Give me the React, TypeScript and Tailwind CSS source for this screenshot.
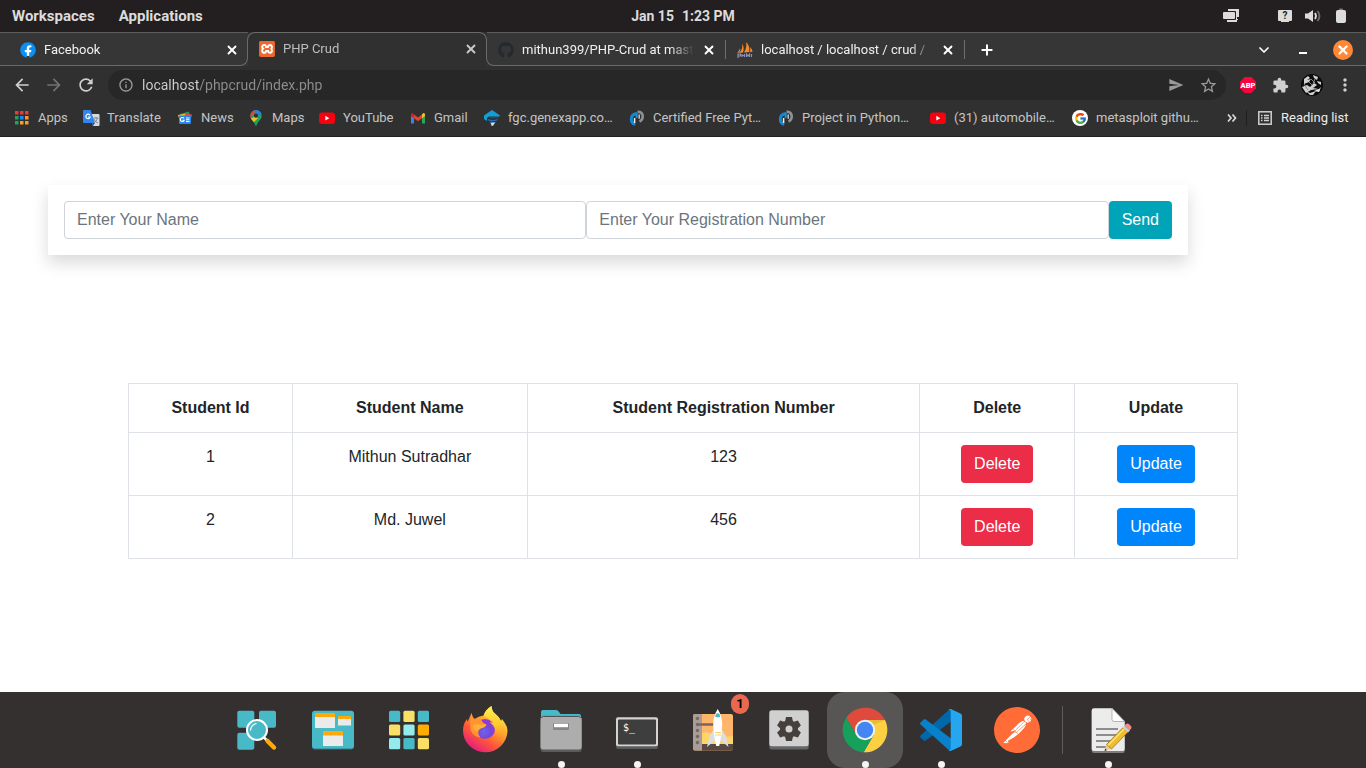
import type { ReactNode } from "react";
import { ChevronDown, Plus, X } from "lucide-react";
import { FaFacebook, FaGithub } from "react-icons/fa";
import { FcGoogle } from "react-icons/fc";
import {
  MdArrowBack,
  MdArrowForward,
  MdExtension,
  MdInfoOutline,
  MdMoreVert,
  MdRefresh,
  MdSend,
  MdStarBorder,
} from "react-icons/md";
import { SiPostman, SiXampp } from "react-icons/si";

/* ---------- Top bar ---------- */

function TopBar() {
  return (
    <header className="flex h-8 shrink-0 items-center bg-[#231f20] px-3 text-[15px] font-bold text-[#dcdcdc]">
      <div className="flex flex-1 gap-6">
        <button>Workspaces</button>
        <button>Applications</button>
      </div>
      <button className="flex gap-2 text-[14px]">
        <span>Jan 15</span>
        <span>1:23 PM</span>
      </button>
      <div className="flex flex-1 items-center justify-end">
        <svg width="16" height="14" viewBox="0 0 16 14" className="mr-[39px]" aria-label="Windows">
          <path d="M5 0h11v8h-2v2h1v1H8v-1h5V3H5z" fill="#dcdcdc" />
          <rect x="0" y="3" width="12" height="7" rx="1" fill="#dcdcdc" />
          <path d="M4 11h10v2H4z" fill="#dcdcdc" />
          <path d="M5 2.500h7.500V10.500H4" fill="none" stroke="#231f20" />
        </svg>
        <svg width="14" height="14" viewBox="0 0 14 14" className="mr-[13px]" aria-label="Network">
          <path d="M1 1h12a1 1 0 0 1 1 1v9a1 1 0 0 1-1 1h-2v1H3v-1H1a1 1 0 0 1-1-1V2a1 1 0 0 1 1-1z" fill="#dcdcdc" />
          <text x="7" y="10" textAnchor="middle" fontSize="10" fontWeight="700" fill="#231f20">?</text>
        </svg>
        <svg width="16" height="14" viewBox="0 0 16 14" className="mr-[15px]" aria-label="Volume">
          <path d="M0 4.500h3L8 1v12L3 9.500H0z" fill="#dcdcdc" />
          <path d="M10 4q2 3 0 6" fill="none" stroke="#dcdcdc" strokeWidth="1.800" />
          <path d="M12.500 2q4 5 0 10" fill="none" stroke="#6f6c6c" strokeWidth="1.800" />
        </svg>
        <svg width="10" height="16" viewBox="0 0 10 16" className="mr-2" aria-label="Battery">
          <rect x="3" y="0.500" width="4" height="3" rx="1" fill="#777" />
          <rect x="0" y="2" width="10" height="13" rx="2" fill="#dcdcdc" />
        </svg>
      </div>
    </header>
  );
}

/* ---------- Tabs ---------- */

function TabBody({ icon, title, dim }: { icon: ReactNode; title: string; dim?: boolean }) {
  return (
    <>
      <span className="flex size-4 shrink-0 items-center justify-center">{icon}</span>
      <span
        className={
          "ml-2 min-w-0 flex-1 overflow-hidden whitespace-nowrap text-left [mask-image:linear-gradient(90deg,#000_calc(100%-24px),transparent)] " +
          (dim ? "text-[#bdbdbd]" : "text-[#f0f0f0]")
        }
      >
        {title}
      </span>
      <button aria-label={"Close " + title} className={"ml-2 shrink-0 " + (dim ? "text-[#c8c8c8]" : "text-white")}>
        <X size={14} strokeWidth={3.2} />
      </button>
    </>
  );
}

function TabStrip() {
  return (
    <div className="flex h-[34px] bg-[#363636] text-[13px]">
      <div className="relative flex w-[248px] items-center border-t border-[#5c5c5c] bg-[#363636] pr-[9px] pl-5 after:pointer-events-none after:absolute after:inset-x-0 after:bottom-0 after:h-[10px] after:rounded-br-lg after:border-r after:border-b after:border-[#6a6a6a]">
        <TabBody
          icon={
            <span className="flex size-3 items-center justify-center rounded-full bg-white">
              <FaFacebook size={16} color="#0a8ff5" className="shrink-0" />
            </span>
          }
          title="Facebook"
        />
      </div>
      <div className="relative flex w-[239px] items-center bg-[#303030] pr-[9px] pl-[11px] before:pointer-events-none before:absolute before:top-0 before:-left-px before:right-0 before:h-6 before:rounded-t-lg before:border-x before:border-t before:border-[#6a6a6a]">
        <TabBody
          dim
          icon={
            <span className="flex size-[14px] items-center justify-center bg-white">
              <SiXampp size={16} color="#f0692c" className="shrink-0" />
            </span>
          }
          title="PHP Crud"
        />
      </div>
      <div className="relative flex flex-1 items-center border-t border-[#5c5c5c] before:pointer-events-none before:absolute before:right-0 before:bottom-0 before:-left-px before:h-[10px] before:rounded-bl-lg before:border-b before:border-l before:border-[#6a6a6a]">
        <div className="flex w-[238px] items-center pr-[9px] pl-[11px]">
          <TabBody icon={<FaGithub size={16} color="#24292f" />} title="mithun399/PHP-Crud at mast" />
        </div>
        <div className="flex w-[240px] items-center border-x border-[#6f6f6f] pr-[9px] pl-[11px]">
          <TabBody
            icon={
              <svg width="16" height="16" viewBox="0 0 16 16">
                <path d="M5 1.500C6 5 5 8 2 11l4-.5C7 7 7 4 5 1.500zM9 0c1 4 0 7-2 10.500l5-.5C13 6 12 3 9 0zM13 5c.6 2 .3 4-.5 5l3-.2C15.400 8 14.500 6.400 13 5zM3 6C2.500 8 1.500 9.500 0 11l2-.5C3 9 3.500 8 3 6z" fill="#f58b2c" />
                <path d="M1 16v-4h2.500v2H1m4-2v3m0-1.500h2.500M7.500 12v3m2 0v-3l1.500 2 1.500-2v3m2-3v3" fill="none" stroke="#8c8fb8" strokeWidth="1.200" />
              </svg>
            }
            title="localhost / localhost / crud /"
          />
        </div>
        <button aria-label="New tab" className="ml-[14px] text-white">
          <Plus size={16} strokeWidth={3} />
        </button>
        <div className="flex flex-1 items-center justify-end gap-[23px] pr-[13px] text-white">
          <button aria-label="Search tabs">
            <ChevronDown size={16} strokeWidth={2.6} />
          </button>
          <button aria-label="Minimize" className="flex h-5 w-4 items-end justify-center pb-[6px]">
            <span className="h-[2px] w-2 bg-white" />
          </button>
          <button aria-label="Close window" className="-ml-px flex size-5 items-center justify-center rounded-full bg-[#ff8838]">
            <X size={14} strokeWidth={4} />
          </button>
        </div>
      </div>
    </div>
  );
}

/* ---------- Address bar ---------- */

function AddressBar() {
  return (
    <div className="flex h-[38px] items-center bg-[#303030] pr-[11px] pl-3 text-[#cfcfcf]">
      <button aria-label="Back" className="mr-3">
        <MdArrowBack size={20} />
      </button>
      <button aria-label="Forward" className="mr-3 text-[#727272]">
        <MdArrowForward size={20} />
      </button>
      <button aria-label="Reload" className="mr-3">
        <MdRefresh size={20} />
      </button>
      <div className="flex h-[30px] flex-1 items-center rounded-full bg-[#272727] pr-2 pl-[10px] text-[#9a9a9a]">
        <MdInfoOutline size={16} />
        <input
          aria-label="Address"
          defaultValue="localhost/phpcrud/index.php"
          className="ml-2 min-w-0 flex-1 bg-[linear-gradient(90deg,#d0d0d0_57px,#8e8e8e_57px)] bg-clip-text text-[14px] text-transparent outline-none"
        />
        <button aria-label="Share" className="mr-[15px]">
          <MdSend size={16} />
        </button>
        <button aria-label="Bookmark this page">
          <MdStarBorder size={19} />
        </button>
      </div>
      <button aria-label="Adblock Plus" className="ml-[14px]">
        <svg width="16" height="16" viewBox="0 0 16 16">
          <path d="M4.700 0h6.600L16 4.700v6.600L11.300 16H4.700L0 11.300V4.700z" fill="#f5063f" />
          <text x="8" y="10.800" textAnchor="middle" fontSize="7.500" fontWeight="900" fill="#fff">ABP</text>
        </svg>
      </button>
      <button aria-label="Extensions" className="ml-4">
        <MdExtension size={17} />
      </button>
      <button aria-label="Profile" className="ml-3">
        <svg width="22" height="22" viewBox="0 0 22 22">
          <circle cx="11" cy="11" r="11" fill="#0c0c0c" />
          <path d="M3 5l4-3 2 2-3 2 4-1-2 3-5 2zM12 1l5 2-1 3-3-2zM1 13l5-2 3 2 4-4 3 2-4 3 5 1-7 1-5 3zM16 7l4 1v3l-3-2zM5 17l4 2 6-2-3 4H9z" fill="#cfcfcf" />
          <path d="M8 8l3 3M10 5l4 4M3 10l4 6M13 14l6 3M14 5l-2 5" stroke="#888" />
          <path d="M13 17l5-2 2-2-2 5z" fill="#eee" />
        </svg>
      </button>
      <button aria-label="Menu" className="ml-3">
        <MdMoreVert size={20} />
      </button>
    </div>
  );
}

/* ---------- Bookmarks ---------- */

const appsGrid = [
  ["#ea3b3b", "#ea3b3b", "#ea3b3b"],
  ["#1ba660", "#1a8cf0", "#fb9a2c"],
  ["#1ba660", "#fb9a2c", "#fb9a2c"],
];

const AppsIcon = () => (
  <svg width="16" height="16" viewBox="0 0 16 16">
    {appsGrid.map((row, y) =>
      row.map((c, x) => <rect key={x + "-" + y} x={1 + x * 5} y={1 + y * 5} width="3.500" height="3.500" fill={c} />),
    )}
  </svg>
);

const TranslateIcon = () => (
  <svg width="17" height="17" viewBox="0 0 17 17" className="shrink-0">
    <path d="M7 4h8.500q1 0 1 1v10q0 1-1 1H10z" fill="#d8dade" />
    <path d="M1 0h6.500L12 13H1q-1 0-1-1V1q0-1 1-1z" fill="#2f86ee" />
    <path d="M9 13h3l-2 3z" fill="#1d57b8" />
    <path d="M7 5.300A2.200 2.200 0 1 0 7.200 7H5" fill="none" stroke="#fff" strokeWidth="1.200" />
    <path d="M10.500 8h5M13 7v1m1.500 0q-.5 3-3.500 5m0-4q1 3 4 4" fill="none" stroke="#75869c" />
  </svg>
);

const NewsIcon = () => (
  <svg width="16" height="16" viewBox="0 0 16 16">
    <path d="M3 4l9-2.500 1 5H3z" fill="#15a05a" />
    <path d="M1 5l8-1.500v5H2z" fill="#f9b42d" />
    <path d="M8 3.500l7 1-1 4H8z" fill="#e8473c" />
    <rect x="2" y="5.500" width="12" height="8.500" rx="1" fill="#2688ee" />
    <path d="M7 8.400A2 2 0 1 0 7.200 10.200H5.500M9 8h3.500M9 9.800h3.500M9 11.500h3.500" fill="none" stroke="#fff" strokeWidth="1.100" />
  </svg>
);

const MapsIcon = () => (
  <svg width="16" height="16" viewBox="0 0 16 16">
    <defs>
      <clipPath id="pin">
        <path d="M8 0a5.700 5.700 0 0 1 5.700 5.700C13.700 10 9.500 11 8.700 15.300q-.7 1.400-1.400 0C6.500 11 2.300 10 2.300 5.700A5.700 5.700 0 0 1 8 0z" />
      </clipPath>
    </defs>
    <g clipPath="url(#pin)">
      <rect width="16" height="16" fill="#1fa45a" />
      <path d="M0 0h9L0 10z" fill="#e5433a" />
      <path d="M6 0h10v3L8 6z" fill="#2f7de9" />
      <path d="M8 6L2 9l3 4 5-5z" fill="#f8bb2c" />
    </g>
    <circle cx="8" cy="5.700" r="2.100" fill="#303030" />
  </svg>
);

const YouTubeIcon = () => (
  <svg width="16" height="16" viewBox="0 0 16 16">
    <rect x="0" y="2.500" width="16" height="11.500" rx="3" fill="#f80010" />
    <path d="M6.300 5.800v4.800l4-2.400z" fill="#fff" />
  </svg>
);

const GmailIcon = () => (
  <svg width="16" height="16" viewBox="0 0 16 16">
    <path d="M1 4v9.500h3V7z" fill="#3b82ee" />
    <path d="M15 4v9.500h-3V7z" fill="#2ba757" />
    <path d="M4 4.500l4 3 4-3v3.800l-4 3-4-3z" fill="#e8432f" />
    <path d="M1 4.500Q1 2.700 2.500 2.900L4 4.200v4.100L1 6z" fill="#c5271c" />
    <path d="M15 4.500q0-1.800-1.500-1.600L12 4.200v4.100L15 6z" fill="#f9bb2d" />
  </svg>
);

const GenexIcon = () => (
  <svg width="16" height="16" viewBox="0 0 16 16">
    <path d="M8 0l8 5.500-1 1.300H4.500L3 8v3L0 9V5.500z" fill="#149fd4" />
    <path d="M5 6.500h9v1.700H6z" fill="#1f4d77" />
    <path d="M3.500 9q5 2 10.500 0-1 2.200-4 2.200H7q-3 0-3.500-2.200z" fill="#2e6dac" />
    <path d="M5.500 11.700q4 1 7 .3l-2 1.600-1.500 2.200H7.500z" fill="#3c6fae" />
    <path d="M7 12.800l4-.3-2 3.300H7.600z" fill="#d5e1ed" />
  </svg>
);

const PythonCourseIcon = () => (
  <svg width="16" height="16" viewBox="0 0 16 16">
    <path d="M8.500 1.700q4.500-.2 5.200 4 .3 4.300-3.200 5.800" fill="none" stroke="#8d9297" strokeWidth="2.600" />
    <path d="M10.200 4.500v4.300" stroke="#d9dcdf" strokeWidth="1.300" />
    <path d="M8 3.600Q2.300 4.500 2.300 9q0 4.500 4 5.200" fill="none" stroke="#1489cf" strokeWidth="3" />
    <path d="M7.700 3v5" stroke="#1496dd" strokeWidth="2" />
    <path d="M5.600 8v5" stroke="#e8eef2" strokeWidth="1.500" />
  </svg>
);

const GoogleIcon = () => (
  <span className="flex size-4 items-center justify-center rounded-full bg-white">
    <FcGoogle size={13} />
  </span>
);

const bookmarks: { label: string; width: string; icon: ReactNode }[] = [
  { label: "Apps", width: "w-[29px]", icon: <AppsIcon /> },
  { label: "Translate", width: "w-[54px]", icon: <TranslateIcon /> },
  { label: "News", width: "w-[31px]", icon: <NewsIcon /> },
  { label: "Maps", width: "w-[31px]", icon: <MapsIcon /> },
  { label: "YouTube", width: "w-[51px]", icon: <YouTubeIcon /> },
  { label: "Gmail", width: "w-[34px]", icon: <GmailIcon /> },
  { label: "fgc.genexapp.co…", width: "w-[105px]", icon: <GenexIcon /> },
  { label: "Certified Free Pyt…", width: "w-[109px]", icon: <PythonCourseIcon /> },
  { label: "Project in Python…", width: "w-[112px]", icon: <PythonCourseIcon /> },
  { label: "(31) automobile…", width: "w-[102px]", icon: <YouTubeIcon /> },
  { label: "metasploit githu…", width: "w-[111px]", icon: <GoogleIcon /> },
];

function BookmarksBar() {
  return (
    <nav className="flex h-[33px] items-center border-b border-[#231f20] bg-[#303030] px-[14px] pb-1 text-[13px] text-[#c4c4c4]">
      <div className="flex flex-1 gap-4">
        {bookmarks.map((b) => (
          <a key={b.label} href="#" className="flex items-center gap-2">
            <span className="flex size-4 items-center justify-center">{b.icon}</span>
            <span className={"whitespace-nowrap " + b.width}>{b.label}</span>
          </a>
        ))}
      </div>
      <button aria-label="More bookmarks" className="mr-[9px]">
        <svg width="10" height="8" viewBox="0 0 10 8">
          <path d="M1 .5L4 4 1 7.500M5.500.5l3 3.500-3 3.500" fill="none" stroke="#d8d8d8" strokeWidth="1.700" />
        </svg>
      </button>
      <span className="h-4 w-px bg-[#1f1f1f]" />
      <button className="ml-[11px] flex items-center gap-[9px] text-[#ececec]">
        <svg width="14" height="14" viewBox="0 0 14 14">
          <rect x=".8" y=".8" width="12.400" height="12.400" fill="none" stroke="#d0d0d0" strokeWidth="1.500" />
          <path d="M3 4.500h1.500M3 7h1.500M3 9.500h1.500M6 4.500h5M6 7h5M6 9.500h5" stroke="#d0d0d0" strokeWidth="1.300" />
        </svg>
        <span className="w-[71px] whitespace-nowrap text-left">Reading list</span>
      </button>
    </nav>
  );
}

/* ---------- Page ---------- */

const students = [
  { id: 1, name: "Mithun Sutradhar", reg: "123" },
  { id: 2, name: "Md. Juwel", reg: "456" },
];

const inputClass =
  "h-[38px] min-w-0 flex-1 rounded border border-[#ced4da] bg-white px-3 text-base text-[#495057] placeholder:text-[#6c757d] outline-none focus:border-[#80bdff]";
const cell = "border border-[#dee2e6] p-3";
const action = "h-[38px] rounded px-[13px] text-white";

function CrudPage() {
  return (
    <main className="flex-1 bg-white p-12 font-['Liberation_Sans',Arial,sans-serif] text-base text-[#212529]">
      <form
        className="flex max-w-[1140px] bg-white p-4 shadow-[0_8px_16px_rgba(0,0,0,0.15)]"
        onSubmit={(e) => e.preventDefault()}
      >
        <input aria-label="Name" placeholder="Enter Your Name" className={inputClass} />
        <input aria-label="Registration number" placeholder="Enter Your Registration Number" className={inputClass} />
        <button className="h-[38px] rounded bg-[#00a4b8] px-[13px] text-white">Send</button>
      </form>

      <div className="mx-auto mt-32 max-w-[1110px]">
        <table className="w-full border-collapse text-center">
          <thead>
            <tr>
              {["Student Id", "Student Name", "Student Registration Number", "Delete", "Update"].map((h) => (
                <th key={h} className={cell}>
                  {h}
                </th>
              ))}
            </tr>
          </thead>
          <tbody>
            {students.map((s) => (
              <tr key={s.id} className="align-top">
                <td className={cell}>{s.id}</td>
                <td className={cell}>{s.name}</td>
                <td className={cell}>{s.reg}</td>
                <td className={cell}>
                  <button className={action + " bg-[#eb2d47]"}>Delete</button>
                </td>
                <td className={cell}>
                  <button className={action + " bg-[#0085fb]"}>Update</button>
                </td>
              </tr>
            ))}
          </tbody>
        </table>
      </div>
    </main>
  );
}

/* ---------- Dock ---------- */

const SearchApps = () => (
  <svg width="48" height="48" viewBox="0 0 48 48">
    <g fill="#48b9c7">
      <rect x="4.300" y="4.700" width="17" height="17" rx="2" />
      <rect x="26" y="4.700" width="17" height="17" rx="2" />
      <rect x="4.300" y="26.700" width="17" height="17" rx="2" />
    </g>
    <path d="M31 31.500l4 4" stroke="#fff" strokeWidth="2.500" />
    <path d="M34.500 35l6.500 6.500" stroke="#ffa90a" strokeWidth="4.500" strokeLinecap="round" />
    <circle cx="24" cy="24" r="10" fill="#48b9c7" stroke="#fff" strokeWidth="2" />
    <path d="M17.500 24.500q.5-6 6-7" fill="none" stroke="#fff" strokeWidth="1.200" />
  </svg>
);

const WorkspacesIcon = () => (
  <svg width="48" height="48" viewBox="0 0 48 48">
    <rect x="3" y="5.500" width="42" height="38" rx="3" fill="#2f7d88" />
    <rect x="3" y="4.700" width="42" height="37.800" rx="3" fill="#48b9c7" />
    <path d="M6 11h20v11H6zM29 12.500h13v7H29zM14 29h20v11H14z" fill="#ebebeb" />
    <path d="M6 8q0-1 1-1h18q1 0 1 1v3H6zM29 11q0-1 1-1h11q1 0 1 1v2H29zM14 26q0-1 1-1h18q1 0 1 1v3.500H14z" fill="#ffa90a" />
  </svg>
);

const gridColors = ["#48b9c7", "#f8df65", "#48b9c7", "#f8df65", "#94ebeb", "#ffad00", "#94ebeb", "#48b9c7", "#f8df65"];

const ApplicationsIcon = () => (
  <svg width="48" height="48" viewBox="0 0 48 48">
    {gridColors.map((c, i) => (
      <rect key={i} x={4 + (i % 3) * 14.4} y={4.7 + Math.floor(i / 3) * 13.7} width="11.200" height="11.200" rx="1.500" fill={c} />
    ))}
  </svg>
);

const FirefoxIcon = () => (
  <svg width="48" height="48" viewBox="0 0 48 48">
    <defs>
      <linearGradient id="ffBody" x1="0.850" y1="0.100" x2="0.250" y2="1">
        <stop offset="0" stopColor="#fff44f" />
        <stop offset="0.350" stopColor="#ffa62e" />
        <stop offset="0.650" stopColor="#ff5a36" />
        <stop offset="1" stopColor="#e31587" />
      </linearGradient>
      <linearGradient id="ffTail" x1="0.500" y1="0" x2="0.500" y2="1">
        <stop offset="0" stopColor="#fff250" />
        <stop offset="0.500" stopColor="#ffca2c" />
        <stop offset="1" stopColor="#ff7b2e" stopOpacity="0" />
      </linearGradient>
      <radialGradient id="ffGlobe" cx="0.450" cy="0.650" r="0.700">
        <stop offset="0" stopColor="#6a66e8" />
        <stop offset="0.550" stopColor="#7a43d6" />
        <stop offset="1" stopColor="#a631d8" />
      </radialGradient>
    </defs>
    <path d="M10.500 7q.5 4 3 6 4-3 9-3.500Q24 4 30.500 0q0 5 4 8t5.500 7l1-2q5.700 7 5.500 12A22.200 21.800 0 0 1 2 24q0-6 4-11l.5 3z" fill="url(#ffBody)" />
    <circle cx="24" cy="23" r="10" fill="url(#ffGlobe)" />
    <path d="M23 10Q24 4 30.500 0q0 5 4 8 8 7 7 16-2 11-12 13 7-8 4-15-2-4-5-6l4 1q-3-4-9.500-7z" fill="url(#ffTail)" />
    <path d="M10.500 7q.5 4 3 6 4-1 7 1 1 3 5 4.500 0 2-4 3-3 1-4 3.500-1 3 2 6.500-8-1-10-8-1-6 1-16.500z" fill="#ff9430" />
    <path d="M12 19q5-1.500 8 0l5-1q0 3-4 4-4 .500-5 4-4-2-4-7z" fill="#ffb03a" />
  </svg>
);

const FilesIcon = () => (
  <svg width="48" height="48" viewBox="0 0 48 48">
    <path d="M4 15V6q0-2 2-2h13q2 0 3 2l1.500 2H42q2 0 2 2v5z" fill="#48b9c7" />
    <rect x="3.500" y="14" width="41.300" height="32" rx="3" fill="#5b5b5b" />
    <path d="M6.500 10.200h35q3.200 0 3.200 3V41q0 2.500-3 2.500h-35q-3.200 0-3.200-2.500V13.200q0-3 3-3z" fill="#adadad" />
    <path d="M4.500 12q.6-1.600 2-1.600h35q1.500 0 2 1.600" fill="none" stroke="#4a4a4a" />
    <rect x="16" y="17" width="16" height="7" rx="1" fill="#868686" />
    <rect x="17" y="17.700" width="14" height="3.500" fill="#fff" />
  </svg>
);

const TerminalIcon = () => (
  <svg width="48" height="48" viewBox="0 0 48 48">
    <rect x="3" y="14" width="42" height="29" rx="2" fill="#5b5b5b" />
    <rect x="3" y="11.300" width="42" height="29" rx="2" fill="#d3d3d3" />
    <rect x="5" y="13.500" width="38" height="25" rx="1" fill="#3e3e3e" />
    <text x="10" y="24.500" fontSize="10" fontFamily="DejaVu Sans Mono, monospace" fill="#fff">$_</text>
  </svg>
);

const RocketIcon = () => (
  <svg width="48" height="48" viewBox="0 0 48 48">
    <rect x="4" y="8" width="40" height="36.500" rx="2" fill="#ffb56a" />
    <path d="M13 27q6-2 12 2 8 3 19 1v8H13z" fill="#fbd46a" />
    <path d="M13 38h31v4.500q0 2-2 2H13z" fill="#574842" />
    <path d="M6 8h7v36.500H6q-2 0-2-2V10q0-2 2-2z" fill="#aa9d98" />
    <g fill="#756762">
      {[12.5, 18.5, 24.5, 30.5, 36.5].map((y) => (
        <circle key={y} cx="8.500" cy={y} r="1.700" />
      ))}
      <rect x="8" y="17.200" width="20" height="2.600" rx="1" />
    </g>
    <path d="M24.500 24l-4 6-2.500 11 7-6h7.500l7 6-2.500-11-4-6z" fill="#ddd" />
    <path d="M28.700 3q4.500 7 4.500 16-.2 9-2.200 17l-.8 4h-3l-.8-4q-2-8-2.200-17 0-9 4.500-16z" fill="#fff" />
    <path d="M27 7.800q1.700-1.300 3.500 0l.7 3q-2.500 1-5 0z" fill="#48b9c7" />
    <path d="M26 26.500h6M26 29h6" stroke="#fbd46a" strokeWidth="1.200" />
  </svg>
);

const SettingsIcon = () => (
  <svg width="48" height="48" viewBox="0 0 48 48">
    <rect x="4.300" y="8" width="39.400" height="35.500" rx="2.500" fill="#666" />
    <rect x="4.300" y="4.300" width="39.400" height="36" rx="2.500" fill="#d0d0d0" />
    <g fill="#463f3b">
      <circle cx="24" cy="23" r="9" />
      {[0, 60, 120, 180, 240, 300].map((a) => (
        <path key={a} d="M20 16l1-5h6l1 5z" transform={`rotate(${a} 24 23)`} />
      ))}
    </g>
    <circle cx="24" cy="23" r="3.500" fill="#d0d0d0" />
  </svg>
);

const ChromeIcon = () => (
  <svg width="48" height="48" viewBox="0 0 48 48">
    <path d="M5.340 11.680A22.400 22.400 0 0 1 44 14H24v10l-8.660 5z" fill="#de4a3c" />
    <path d="M44 14a22.400 22.400 0 0 1-21.340 32.320L32.660 29 24 24V14z" fill="#fdd044" />
    <path d="M22.660 46.320A22.400 22.400 0 0 1 5.340 11.680L15.340 29 24 24l8.660 5z" fill="#15a05c" />
    <path d="M24 14h20l-12 5z" fill="#d8a52e" opacity=".5" />
    <circle cx="24" cy="24" r="10.200" fill="#f2f2f2" />
    <circle cx="24" cy="24" r="8.200" fill="#4487f4" />
  </svg>
);

const CodeIcon = () => (
  <svg width="48" height="48" viewBox="0 0 48 48">
    <path d="M3.500 29.500L32 3.700q1-.8 2-.4V15.500L8.800 34.500q-1 .8-2 0L3.500 31.500q-1-1 0-2z" fill="#0067aa" />
    <path d="M3.500 18.500L32 44.300q1 .8 2 .4V32.500L8.800 13.500q-1-.8-2 0L3.500 16.500q-1 1 0 2z" fill="#0880ca" />
    <path d="M33.700 3L43.500 7.500q1.500.8 1.500 2.300V38.200q0 1.500-1.500 2.300L33.700 45q-1.500.2-2.500-1 2.500 1.200 2.500-1.500V5.500q0-2.700-2.500-1.500 1-1.200 2.500-1z" fill="#27a6f0" />
  </svg>
);

const PostmanIcon = () => (
  <span className="flex size-11 items-center justify-center rounded-full bg-white">
    <SiPostman size={46} color="#ff6c37" className="shrink-0" />
  </span>
);

const EditorIcon = () => (
  <svg width="48" height="48" viewBox="0 0 48 48">
    <path d="M10 3h18l12.700 13v29q0 2-2 2H10q-2.300 0-2.300-2V5q0-2 2.300-2z" fill="#7c7c7c" />
    <path d="M10 2.300h18L40.700 15.500V43q0 2-2 2H10q-2.300 0-2.300-2V4.300q0-2 2.300-2z" fill="#ececec" />
    <path d="M28 2.300L40.700 15.500H30q-2 0-2-2z" fill="#fff" stroke="#a5a5a5" strokeWidth=".8" />
    <path d="M12 23h22M12 29h22M12 35h18M12 41h10" stroke="#6d6d6d" strokeWidth="1.500" />
    <path d="M20.500 45l2-7 5 4.500z" fill="#e8cb97" />
    <path d="M22.500 38.500L39 21.500l5 4.500-16.500 17z" fill="#f0bd2c" stroke="#9c7410" strokeWidth=".8" />
    <path d="M24 39.500L40 23" stroke="#ffe27a" strokeWidth="1.500" />
    <path d="M38.500 21.500l2-2 5.500 5-2 2z" fill="#cfcfcf" />
    <path d="M40.500 19.500l1.500-1.500q1.500-1 3 .2l2 2q1 1.200 0 2.500L45.500 24.500z" fill="#ef8d8d" />
    <path d="M20.500 45l.8-2.500 1.600 1.700z" fill="#333" />
  </svg>
);

type DockApp = { name: string; icon: ReactNode; running?: boolean; active?: boolean; badge?: string };

const dockApps: DockApp[] = [
  { name: "Launcher", icon: <SearchApps /> },
  { name: "Workspaces", icon: <WorkspacesIcon /> },
  { name: "Applications", icon: <ApplicationsIcon /> },
  { name: "Firefox", icon: <FirefoxIcon /> },
  { name: "Files", icon: <FilesIcon />, running: true },
  { name: "Terminal", icon: <TerminalIcon />, running: true },
  { name: "Shop", icon: <RocketIcon />, badge: "1" },
  { name: "Settings", icon: <SettingsIcon /> },
  { name: "Chrome", icon: <ChromeIcon />, running: true, active: true },
  { name: "Code", icon: <CodeIcon />, running: true },
  { name: "Postman", icon: <PostmanIcon /> },
];

function DockItem({ app }: { app: DockApp }) {
  return (
    <button
      aria-label={app.name}
      className={"relative flex size-[76px] items-center justify-center rounded-[18px] " + (app.active ? "bg-[#585655]" : "")}
    >
      {app.icon}
      {app.badge && (
        <span className="absolute top-[2px] right-[2px] flex h-5 w-[18px] items-center justify-center rounded-full bg-[#e8694f] text-[13px] font-bold text-black">
          {app.badge}
        </span>
      )}
      {app.running && <span className="absolute inset-x-0 bottom-0 mx-auto size-[7px] rounded-full bg-[#f5f5f5]" />}
    </button>
  );
}

function Dock() {
  return (
    <footer className="flex shrink-0 items-center justify-center bg-[#33302f] pr-px">
      {dockApps.map((app) => (
        <DockItem key={app.name} app={app} />
      ))}
      <span className="mx-[7px] h-12 w-px bg-[#5e5b5a]" />
      <DockItem app={{ name: "Text Editor", icon: <EditorIcon />, running: true }} />
    </footer>
  );
}

export default function App() {
  return (
    <div className="flex min-h-screen flex-col bg-[#231f20] font-[Roboto,'Noto_Sans',sans-serif]">
      <TopBar />
      <div className="shrink-0">
        <TabStrip />
        <AddressBar />
        <BookmarksBar />
      </div>
      <CrudPage />
      <Dock />
    </div>
  );
}
